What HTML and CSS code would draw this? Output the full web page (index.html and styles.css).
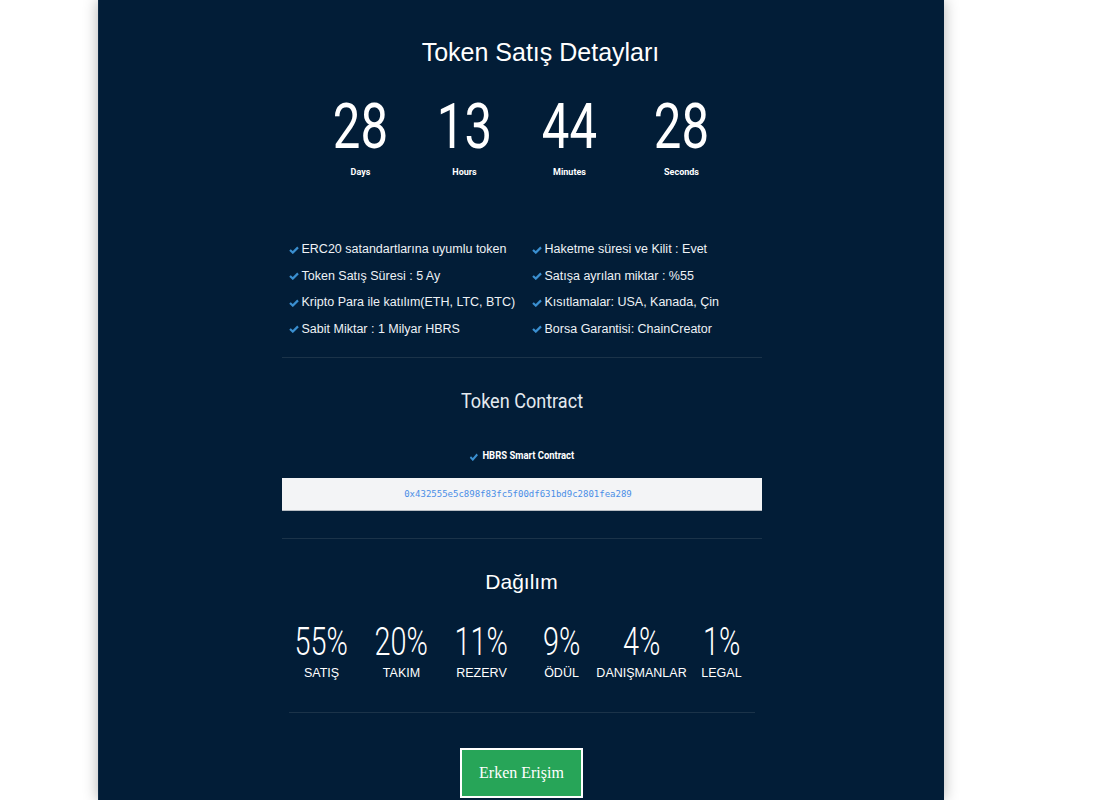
FILE: index.html
```html
<!DOCTYPE html>
<html lang="tr">

<head>
    <meta charset="UTF-8">
    <meta name="viewport" content="width=device-width, initial-scale=1.0">
    <title>Token Satış Detayları</title>
    <link rel="stylesheet" href="styles.css">
</head>

<body>
    <main class="page">
        <section class="sale">
            <div class="inner">
                <h2 class="sale-title">Token Satış Detayları</h2>

                <!-- countdown -->
                <div class="countdown">
                    <div class="count"><span class="count-num">28</span><span class="count-label">Days</span></div>
                    <div class="count"><span class="count-num">13</span><span class="count-label">Hours</span></div>
                    <div class="count"><span class="count-num">44</span><span class="count-label">Minutes</span></div>
                    <div class="count"><span class="count-num">28</span><span class="count-label">Seconds</span></div>
                </div>

                <ul class="features">
                    <li><svg class="check" viewBox="0 0 10 8"><polyline points="1,4 3.8,6.6 9,1.4" /></svg>ERC20 satandartlarına uyumlu token</li>
                    <li><svg class="check" viewBox="0 0 10 8"><polyline points="1,4 3.8,6.6 9,1.4" /></svg>Haketme süresi ve Kilit : Evet</li>
                    <li><svg class="check" viewBox="0 0 10 8"><polyline points="1,4 3.8,6.6 9,1.4" /></svg>Token Satış Süresi : 5 Ay</li>
                    <li><svg class="check" viewBox="0 0 10 8"><polyline points="1,4 3.8,6.6 9,1.4" /></svg>Satışa ayrılan miktar : %55</li>
                    <li><svg class="check" viewBox="0 0 10 8"><polyline points="1,4 3.8,6.6 9,1.4" /></svg>Kripto Para ile katılım(ETH, LTC, BTC)</li>
                    <li><svg class="check" viewBox="0 0 10 8"><polyline points="1,4 3.8,6.6 9,1.4" /></svg>Kısıtlamalar: USA, Kanada, Çin</li>
                    <li><svg class="check" viewBox="0 0 10 8"><polyline points="1,4 3.8,6.6 9,1.4" /></svg>Sabit Miktar : 1 Milyar HBRS</li>
                    <li><svg class="check" viewBox="0 0 10 8"><polyline points="1,4 3.8,6.6 9,1.4" /></svg>Borsa Garantisi: ChainCreator</li>
                </ul>

                <div class="divider"></div>

                <!-- contract -->
                <h3 class="contract-title"><span>Token Contract</span></h3>
                <p class="contract-name"><span><svg class="check" viewBox="0 0 10 8"><polyline points="1,4 3.8,6.6 9,1.4" /></svg>HBRS Smart Contract</span></p>
                <div class="contract-address">0x432555e5c898f83fc5f00df631bd9c2801fea289</div>

                <div class="divider wide-gap"></div>

                <!-- distribution -->
                <h3 class="dist-title">Dağılım</h3>
                <div class="dist">
                    <div class="dist-item"><span class="dist-num">55%</span><span class="dist-label">SATIŞ</span></div>
                    <div class="dist-item"><span class="dist-num">20%</span><span class="dist-label">TAKIM</span></div>
                    <div class="dist-item"><span class="dist-num">11%</span><span class="dist-label">REZERV</span></div>
                    <div class="dist-item"><span class="dist-num">9%</span><span class="dist-label">ÖDÜL</span></div>
                    <div class="dist-item"><span class="dist-num">4%</span><span class="dist-label">DANIŞMANLAR</span></div>
                    <div class="dist-item"><span class="dist-num">1%</span><span class="dist-label">LEGAL</span></div>
                </div>

                <div class="divider short"></div>

                <button class="btn-access">Erken Erişim</button>
            </div>
        </section>
    </main>
</body>

</html>
```

FILE: styles.css
```css
/* page reset */
* {
    box-sizing: border-box;
}

body {
    margin: 0;
    background-color: #fff;
    font-family: "Liberation Sans", Arial, sans-serif;
}

.page {
    min-height: 100vh;
}

.sale {
    width: 846px;
    min-height: 800px;
    margin-left: 98px;
    padding-top: 37px;
    background-color: #021d37;
    border-left: 1px solid #0e2a45;
    box-shadow: 0 0 14px rgba(0, 0, 0, 0.3);
}

.inner {
    width: 480px;
    margin: 0 auto;
    text-align: center;
    color: #fff;
}

.sale-title {
    margin: 0;
    padding-left: 38px;
    font-size: 25px;
    line-height: 30px;
    font-weight: 400;
}

/* countdown */
.countdown {
    display: grid;
    grid-template-columns: 104px 104px 106px 118px;
    justify-content: center;
    padding-left: 6px;
    margin-top: 28px;
}

.count-num {
    display: inline-block;
    font-family: Roboto, sans-serif;
    font-weight: 400;
    font-size: 63px;
    line-height: 63px;
    transform: scaleX(0.78);
}

.count-label {
    display: block;
    margin-top: 8px;
    font-family: Roboto, sans-serif;
    font-weight: 700;
    font-size: 9px;
    line-height: 12px;
}

/* feature list */
.features {
    list-style: none;
    margin: 58px 0 0;
    padding: 0 0 0 7px;
    display: grid;
    grid-template-columns: 243px 243px;
    text-align: left;
}

.features li {
    display: flex;
    align-items: center;
    gap: 3px;
    font-size: 12.5px;
    line-height: 26.5px;
    color: #eef2f6;
}

.check {
    width: 10px;
    height: 8px;
    margin-top: 1px;
    flex-shrink: 0;
    fill: none;
    stroke: #3a8fd0;
    stroke-width: 2.2;
}

.divider {
    height: 1px;
    margin-top: 15px;
    background-color: #1b3349;
}

.divider.wide-gap {
    margin-top: 27px;
}

.divider.short {
    margin: 31px 7px 0;
}

/* contract */
.contract-title {
    margin: 30px 0 0;
    font-family: Roboto, sans-serif;
    font-weight: 400;
    font-size: 21px;
    line-height: 26px;
    color: #e4eaf0;
}

.contract-title span {
    display: inline-block;
    transform: scaleX(0.86);
}

.contract-name {
    margin: 35px 0 0;
    font-family: Roboto, sans-serif;
    font-weight: 700;
    font-size: 11px;
    line-height: 14px;
}

.contract-name span {
    display: inline-flex;
    align-items: center;
    gap: 5px;
    transform: scaleX(0.86);
}

.contract-address {
    margin-top: 13px;
    padding-right: 7px;
    background-color: #f3f4f6;
    border-bottom: 1px solid #b8bdc3;
    font-family: "DejaVu Sans Mono", monospace;
    font-size: 9px;
    line-height: 32px;
    color: #4a8ee6;
}

/* distribution */
.dist-title {
    margin: 30px 0 0;
    font-size: 21px;
    line-height: 26px;
    font-weight: 400;
}

.dist {
    display: grid;
    grid-template-columns: repeat(6, 80px);
    justify-items: center;
    margin-top: 28px;
}

.dist-item {
    display: flex;
    flex-direction: column;
    align-items: center;
    white-space: nowrap;
}

.dist-num {
    display: inline-block;
    font-family: Roboto, sans-serif;
    font-weight: 300;
    font-size: 38px;
    line-height: 38px;
    transform: scaleX(0.76);
}

.dist-label {
    margin-top: 4px;
    font-size: 12.5px;
    line-height: 16px;
}

.btn-access {
    margin-top: 35px;
    padding: 14px 17px;
    background-color: #27a558;
    border: 2px solid #fff;
    color: #fff;
    font-family: "Liberation Serif", serif;
    font-size: 16px;
    cursor: pointer;
}
```
